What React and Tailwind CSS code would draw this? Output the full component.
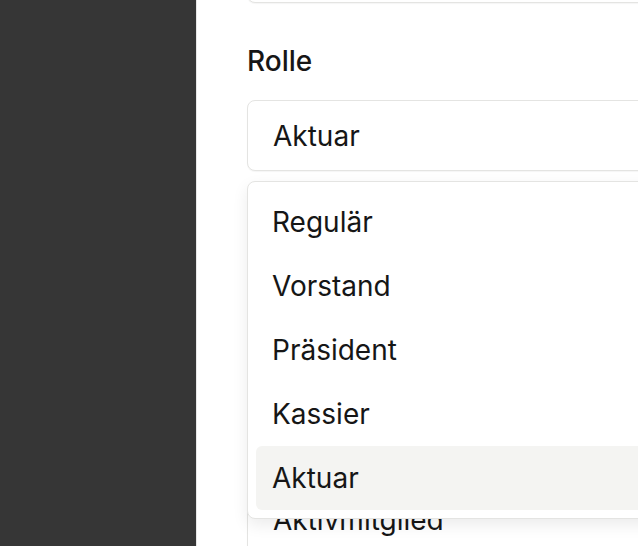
import React from "react";

const roles = ["Regulär", "Vorstand", "Präsident", "Kassier", "Aktuar"];

const Field = ({ value, className = "" }) => (
  <div
    className={`h-[71px] w-[520px] flex items-center pl-[25px] rounded-lg border border-[#e4e4e2] bg-white shadow-[0_1px_1px_rgba(0,0,0,0.04)] text-[28px] text-[#161616] ${className}`}
  >
    {value}
  </div>
);

const App = () => {
  const selected = "Aktuar";

  return (
    <div
      className="flex h-[546px] w-[638px] overflow-hidden bg-white"
      style={{ fontFamily: "Inter, 'Noto Sans', sans-serif" }}
    >
      <aside className="w-[196px] shrink-0 bg-[#363636]" />

      <main className="relative flex-1 border-l border-[#e6e6e6] pl-[50px]">
        <Field value="" className="-mt-[68px]" />

        <label className="mt-[38px] block h-[40px] text-[28px] font-medium leading-[40px] text-[#161616]">
          Rolle
        </label>

        <Field value={selected} className="mt-[19px]" />

        {/* next field, mostly hidden under the open menu */}
        <div className="mt-[313px]">
          <Field value="Aktivmitglied" />
        </div>

        <div className="absolute left-[50px] top-[181px] w-[520px] rounded-lg border border-[#e4e4e2] bg-white p-2 shadow-[0_6px_16px_rgba(0,0,0,0.08)]">
          {roles.map((role) => (
            <div
              key={role}
              className={`flex h-[64px] items-center rounded-md pl-[16px] text-[28px] text-[#161616] ${
                role === selected ? "bg-[#f4f4f2]" : ""
              }`}
            >
              {role}
            </div>
          ))}
        </div>
      </main>
    </div>
  );
};

export default App;
